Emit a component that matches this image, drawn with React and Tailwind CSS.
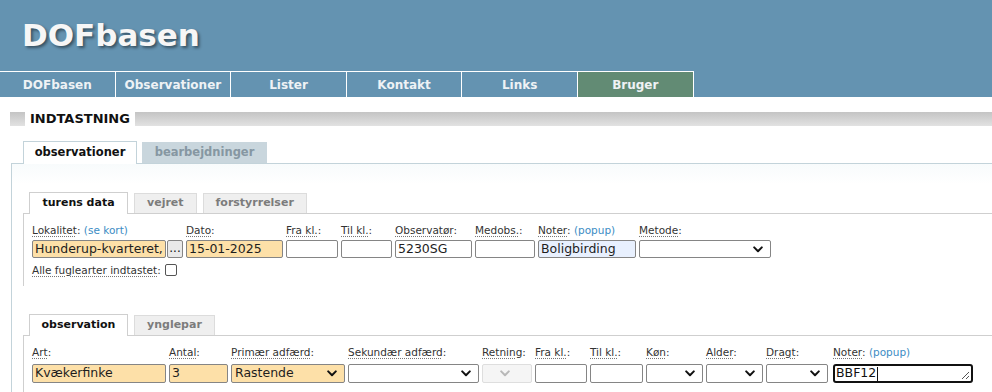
import React from "react";

const navItems = ["DOFbasen", "Observationer", "Lister", "Kontakt", "Links", "Bruger"];

function Chevron({ light }) {
  return (
    <svg width="10" height="7" viewBox="0 0 10 7" className="shrink-0">
      <polyline
        points="1.2,1.4 5,5.2 8.8,1.4"
        fill="none"
        stroke={light ? "#b8b8b8" : "#111"}
        strokeWidth="2"
        strokeLinecap="round"
        strokeLinejoin="round"
      />
    </svg>
  );
}

function Label({ text, extra }) {
  return (
    <div className="h-[14px] whitespace-nowrap text-[10.5px] leading-[14px] text-[#333]">
      <span className="underline decoration-dotted decoration-[#777] underline-offset-[2px]">{text}</span>:
      {extra && <span className="text-[#3b8cc4]"> ({extra})</span>}
    </div>
  );
}

function Input({ value, tone, className }) {
  const bg = tone === "peach" ? "bg-[#fde0a8]" : tone === "blue" ? "bg-[#e8f0fe]" : "bg-white";
  return (
    <div
      className={`flex items-center overflow-hidden whitespace-nowrap rounded-[2px] border border-[#858585] pl-[2px] text-[12.5px] leading-none text-[#1e1e1e] ${bg} ${className}`}
    >
      {value}
    </div>
  );
}

function Select({ value, tone, disabled, className }) {
  const bg = tone === "peach" ? "bg-[#fde0a8]" : disabled ? "bg-[#f5f5f5]" : "bg-white";
  const border = disabled ? "border-[#dedede]" : "border-[#858585]";
  return (
    <div
      className={`flex items-center justify-between rounded-[2px] border pl-[3px] pr-[7px] text-[12.5px] leading-none text-[#1e1e1e] ${bg} ${border} ${className}`}
    >
      <span>{value}</span>
      <Chevron light={disabled} />
    </div>
  );
}

function SubTabs({ tabs }) {
  return (
    <div className="relative z-10 -mb-px flex items-end gap-[6px] pl-[6px]">
      {tabs.map((t, i) =>
        i === 0 ? (
          <div
            key={t}
            className="flex h-[22px] w-[99px] items-center justify-center border border-b-0 border-[#cfcfcf] bg-white pb-[1px] text-[11px] font-bold text-[#111]"
          >
            {t}
          </div>
        ) : (
          <div
            key={t}
            className="mb-px flex h-[20px] items-center justify-center border border-b-0 border-[#dcdcdc] bg-[#efefef] px-[12px] text-[11px] font-bold text-[#7c7c7c]"
          >
            {t}
          </div>
        )
      )}
    </div>
  );
}

export default function App() {
  return (
    <div className="h-[392px] w-full overflow-hidden bg-white font-['DejaVu_Sans',Verdana,sans-serif]">
      {/* header */}
      <div className="h-[71px] bg-[#6493b1] pl-[22px] pt-[20px]">
        <div className="text-[31px] font-bold leading-[31px] text-[#f6f6f6] [text-shadow:2px_2px_3px_rgba(0,0,0,0.45)]">
          DOFbasen
        </div>
      </div>
      <div className="flex h-[26px] bg-[#6493b1]">
        <div className="flex border-t border-white">
          {navItems.map((n) => (
            <div
              key={n}
              className={`flex w-[115.6px] items-center justify-center border-r border-white text-[12px] font-bold text-[#eef2f5] ${
                n === "Bruger" ? "bg-[#628b74]" : ""
              }`}
            >
              {n}
            </div>
          ))}
        </div>
      </div>

      {/* section header */}
      <div className="ml-[10px] mt-[15px] flex h-[14px] items-stretch">
        <div className="w-[15px] bg-gradient-to-b from-[#c4c4c4] to-[#e2e2e2]" />
        <div className="bg-white px-[5px] text-[13px] font-bold leading-[14px] text-[#111]">INDTASTNING</div>
        <div className="flex-1 bg-gradient-to-b from-[#c4c4c4] to-[#e2e2e2]" />
      </div>

      {/* outer tabs */}
      <div className="ml-[11px] mt-[15px]">
        <div className="relative z-10 -mb-px flex items-end gap-[5px] pl-[12px]">
          <div className="flex h-[23px] w-[114px] items-center justify-center border border-b-0 border-[#c3d3da] bg-white pb-[1px] text-[11.5px] font-bold text-[#111]">
            observationer
          </div>
          <div className="mb-px flex h-[21px] w-[125px] items-center justify-center bg-[#c9d6dd] text-[11.5px] font-bold text-[#8697a2]">
            bearbejdninger
          </div>
        </div>
        <div className="border-l border-t border-[#c3d3da] bg-gradient-to-b from-[#f8fbfc] to-white to-[20px] pb-[20px] pt-[28px]">
          {/* turens data */}
          <div className="ml-[11px]">
            <SubTabs tabs={["turens data", "vejret", "forstyrrelser"]} />
            <div className="border-l border-t border-[#cfcfcf] pb-[9px] pl-[8px] pt-[9px]">
              <div className="flex gap-[3px]">
                <div className="w-[151px]">
                  <div className="h-[14px] whitespace-nowrap text-[10.5px] leading-[14px] text-[#333]">
                    <span className="underline decoration-dotted decoration-[#777] underline-offset-[2px]">Lokalitet</span>:
                    <span className="text-[#3b8cc4]"> (se kort)</span>
                  </div>
                  <div className="mt-[3px] flex gap-[1px]">
                    <Input value="Hunderup-kvarteret," tone="peach" className="h-[18px] w-[134px]" />
                    <div className="flex h-[18px] w-[16px] items-center justify-center rounded-[2px] border border-[#858585] bg-[#e9e9e9] pb-[3px] text-[12px] text-[#111]">
                      ...
                    </div>
                  </div>
                </div>
                <div className="w-[97px]">
                  <Label text="Dato" />
                  <Input value="15-01-2025" tone="peach" className="mt-[3px] h-[18px] w-full" />
                </div>
                <div className="w-[52px]">
                  <Label text="Fra kl." />
                  <Input value="" className="mt-[3px] h-[18px] w-full" />
                </div>
                <div className="w-[51px]">
                  <Label text="Til kl." />
                  <Input value="" className="mt-[3px] h-[18px] w-full" />
                </div>
                <div className="w-[77px]">
                  <Label text="Observatør" />
                  <Input value="5230SG" className="mt-[3px] h-[18px] w-full" />
                </div>
                <div className="w-[60px]">
                  <Label text="Medobs." />
                  <Input value="" className="mt-[3px] h-[18px] w-full" />
                </div>
                <div className="w-[98px]">
                  <Label text="Noter" extra="popup" />
                  <Input value="Boligbirding" tone="blue" className="mt-[3px] h-[18px] w-full" />
                </div>
                <div className="w-[132px]">
                  <Label text="Metode" />
                  <Select value="" className="mt-[3px] h-[18px] w-full" />
                </div>
              </div>
              <div className="mt-[5px] flex items-center gap-[4px] text-[10.5px] leading-[14px] text-[#333]">
                <span>
                  <span className="underline decoration-dotted decoration-[#777] underline-offset-[2px]">
                    Alle fuglearter indtastet
                  </span>
                  :
                </span>
                <div className="h-[12px] w-[12px] rounded-[2px] border border-[#555] bg-white" />
              </div>
            </div>
          </div>

          {/* observation */}
          <div className="ml-[11px] mt-[28px]">
            <SubTabs tabs={["observation", "ynglepar"]} />
            <div className="border-l border-t border-[#cfcfcf] pb-[10px] pl-[8px] pt-[9px]">
              <div className="flex gap-[3px]">
                <div className="w-[134px]">
                  <Label text="Art" />
                  <Input value="Kvækerfinke" tone="peach" className="mt-[5px] h-[19px] w-full" />
                </div>
                <div className="w-[59px]">
                  <Label text="Antal" />
                  <Input value="3" tone="peach" className="mt-[5px] h-[19px] w-full" />
                </div>
                <div className="w-[114px]">
                  <Label text="Primær adfærd" />
                  <Select value="Rastende" tone="peach" className="mt-[5px] h-[19px] w-full" />
                </div>
                <div className="w-[131px]">
                  <Label text="Sekundær adfærd" />
                  <Select value="" className="mt-[5px] h-[19px] w-full" />
                </div>
                <div className="w-[50px]">
                  <Label text="Retning" />
                  <Select value="" disabled className="mt-[5px] h-[19px] w-full justify-center" />
                </div>
                <div className="w-[52px]">
                  <Label text="Fra kl." />
                  <Input value="" className="mt-[5px] h-[19px] w-full" />
                </div>
                <div className="w-[53px]">
                  <Label text="Til kl." />
                  <Input value="" className="mt-[5px] h-[19px] w-full" />
                </div>
                <div className="w-[57px]">
                  <Label text="Køn" />
                  <Select value="" className="mt-[5px] h-[19px] w-full" />
                </div>
                <div className="w-[57px]">
                  <Label text="Alder" />
                  <Select value="" className="mt-[5px] h-[19px] w-full" />
                </div>
                <div className="w-[62px]">
                  <Label text="Dragt" />
                  <Select value="" className="mt-[5px] h-[19px] w-full" />
                </div>
                <div className="ml-[2px] w-[140px]">
                  <Label text="Noter" extra="popup" />
                  <div className="relative mt-[5px] flex h-[19px] w-full items-center rounded-[3px] border-2 border-[#111] bg-white pl-[1px] text-[12.5px] leading-none text-[#111]">
                    <span>BBF12</span>
                    <span className="ml-[1px] h-[14px] w-px bg-[#111]" />
                    <svg width="9" height="9" viewBox="0 0 9 9" className="absolute bottom-[1px] right-[1px]">
                      <line x1="1" y1="8" x2="8" y2="1" stroke="#555" strokeWidth="1" />
                      <line x1="5" y1="8" x2="8" y2="5" stroke="#555" strokeWidth="1" />
                    </svg>
                  </div>
                </div>
              </div>
            </div>
          </div>
        </div>
      </div>
    </div>
  );
}
